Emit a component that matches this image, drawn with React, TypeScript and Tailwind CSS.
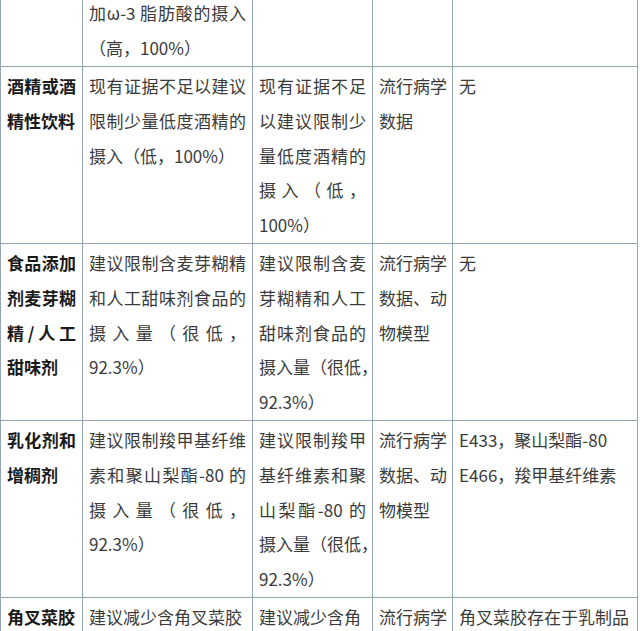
import React from "react";

type Line = { t: string; j?: boolean };
type Cell = Line[];

const L = (t: string, j = false): Line => ({ t, j });

const rows: { cells: Cell[]; first?: boolean }[] = [
  {
    first: true,
    cells: [[], [L("加ω-3 脂肪酸的摄入", true), L("（高，100%）")], [], [], []],
  },
  {
    cells: [
      [L("酒精或酒", true), L("精性饮料")],
      [L("现有证据不足以建议", true), L("限制少量低度酒精的", true), L("摄入（低，100%）")],
      [L("现有证据不足", true), L("以建议限制少", true), L("量低度酒精的", true), L("摄入（低，", true), L("100%）")],
      [L("流行病学", true), L("数据")],
      [L("无")],
    ],
  },
  {
    cells: [
      [L("食品添加", true), L("剂麦芽糊", true), L("精/人工", true), L("甜味剂")],
      [L("建议限制含麦芽糊精", true), L("和人工甜味剂食品的", true), L("摄入量（很低，", true), L("92.3%）")],
      [L("建议限制含麦", true), L("芽糊精和人工", true), L("甜味剂食品的", true), L("摄入量（很低，", true), L("92.3%）")],
      [L("流行病学", true), L("数据、动", true), L("物模型")],
      [L("无")],
    ],
  },
  {
    cells: [
      [L("乳化剂和", true), L("增稠剂")],
      [L("建议限制羧甲基纤维", true), L("素和聚山梨酯-80 的", true), L("摄入量（很低，", true), L("92.3%）")],
      [L("建议限制羧甲", true), L("基纤维素和聚", true), L("山梨酯-80 的", true), L("摄入量（很低，", true), L("92.3%）")],
      [L("流行病学", true), L("数据、动", true), L("物模型")],
      [L("E433，聚山梨酯-80"), L("E466，羧甲基纤维素")],
    ],
  },
  {
    cells: [
      [L("角叉菜胶")],
      [L("建议减少含角叉菜胶")],
      [L("建议减少含角")],
      [L("流行病学")],
      [L("角叉菜胶存在于乳制品")],
    ],
  },
];

export default function App() {
  return (
    <div
      className="w-[640px] h-[631px] overflow-hidden bg-white text-[#3b3b3b]"
      style={{ fontFamily: '"Noto Sans CJK SC", "Noto Sans", sans-serif' }}
    >
      <div className="w-[638px] border-l border-[#93a6b7]">
        {rows.map((row, ri) => (
          <div
            key={ri}
            className={`grid grid-cols-[82px_170px_120px_80px_185px] ${row.first ? "grid-rows-[67px]" : ""}`}
          >
            {row.cells.map((cell, ci) => (
              <div
                key={ci}
                className={`border-r border-b border-[#93a6b7] pl-[6px] pr-[6px] text-[17px] leading-[34.8px] ${
                  row.first ? "flex flex-col justify-end pt-0 min-h-0 h-[67px]" : "pt-[2px]"
                } ${ci === 0 ? "font-bold text-[#1a1a1a]" : ""}`}
              >
                {cell.map((ln, li) => (
                  <div
                    key={li}
                    className={`shrink-0 whitespace-nowrap ${ln.j ? "text-justify [text-align-last:justify]" : "text-left"}`}
                  >
                    {ln.t}
                  </div>
                ))}
              </div>
            ))}
          </div>
        ))}
      </div>
    </div>
  );
}
